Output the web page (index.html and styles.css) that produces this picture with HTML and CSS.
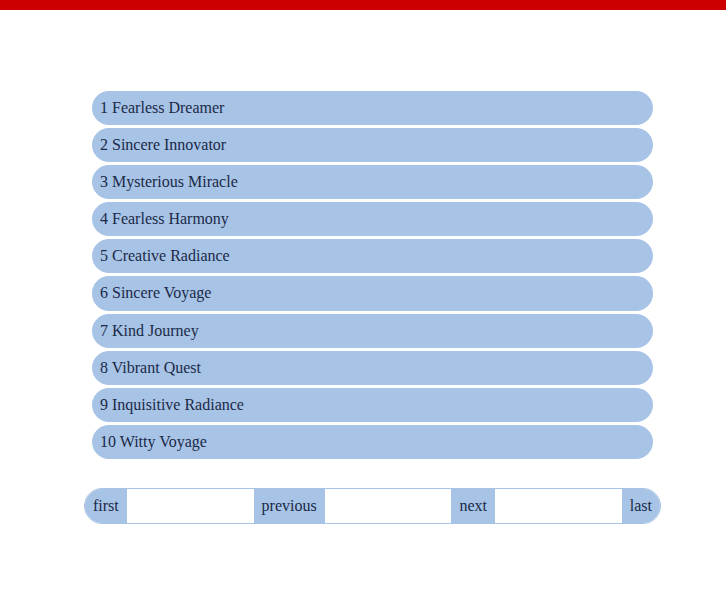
FILE: index.html
```html
<!DOCTYPE html>
<html>
<head>
<meta charset="utf-8">
<link rel="stylesheet" href="styles.css">
</head>
<body>
<div class="topbar"></div>
<main class="wrap">
  <ul class="list">
    <li class="item">1 Fearless Dreamer</li>
    <li class="item">2 Sincere Innovator</li>
    <li class="item">3 Mysterious Miracle</li>
    <li class="item">4 Fearless Harmony</li>
    <li class="item">5 Creative Radiance</li>
    <li class="item">6 Sincere Voyage</li>
    <li class="item">7 Kind Journey</li>
    <li class="item">8 Vibrant Quest</li>
    <li class="item">9 Inquisitive Radiance</li>
    <li class="item">10 Witty Voyage</li>
  </ul>
  <nav class="pager">
    <span class="btn">first</span>
    <span class="btn">previous</span>
    <span class="btn">next</span>
    <span class="btn">last</span>
  </nav>
</main>
</body>
</html>
```
FILE: styles.css
```css
html, body {
  margin: 0;
  padding: 0;
  background: #ffffff;
}
body {
  font-family: "Liberation Serif", "Times New Roman", serif;
  font-size: 16px;
  color: #1b2a47;
}
.topbar {
  height: 10px;
  background: #cc0000;
}
.wrap {
  width: 577px;
  margin: 81px 0 0 84px;
}
.list {
  list-style: none;
  margin: 0;
  padding: 0 8px;
  display: flex;
  flex-direction: column;
  gap: 3px;
}
.item {
  height: 34.1px;
  line-height: 34px;
  padding: 0 8px;
  background: #a7c3e6;
  border-radius: 17px;
}
.pager {
  margin-top: 29px;
  height: 34px;
  border: 1px solid #a7c3e6;
  border-radius: 18px;
  overflow: hidden;
  display: flex;
  justify-content: space-between;
}
.btn {
  background: #a7c3e6;
  line-height: 34px;
  padding: 0 8px;
}
```
